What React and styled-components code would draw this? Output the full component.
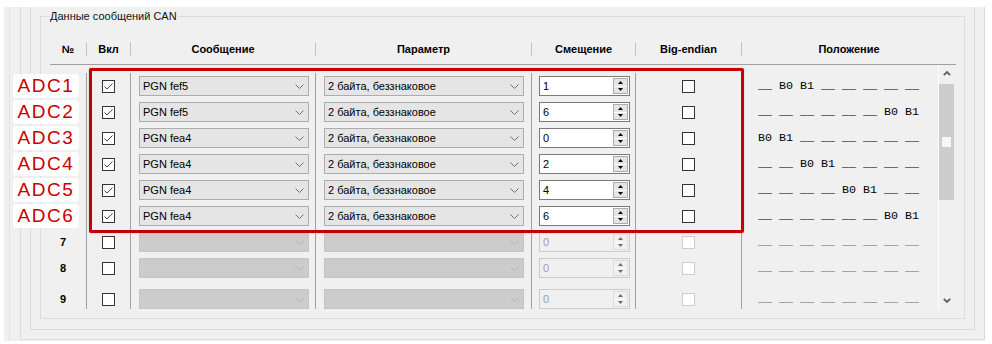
import React from 'react';
import styled, { createGlobalStyle } from 'styled-components';

const GlobalStyle = createGlobalStyle`
  html, body {
    margin: 0;
    padding: 0;
    background: #ffffff;
  }
  body {
    font-family: "Liberation Sans", Arial, sans-serif;
    font-size: 11px;
    color: #000;
  }
`;

const COLS = '36px 44px 185px 216px 104px 106px 197px';

const Screen = styled.div`
  box-sizing: border-box;
  margin: 7px 0 0 4px;
  width: 981px;
  height: 334px;
  padding-left: 5px;
  background: #f0f0f0;
  display: flex;
`;

const Rule = styled.div`
  flex: 1;
  display: flex;
  border-left: 1px solid #e2e2e2;
  padding-left: 10px;
`;

const Frame = styled.div`
  box-sizing: border-box;
  flex: 1;
  display: flex;
  flex-direction: column;
  border: 1px solid #dadada;
  border-top: none;
  margin: ${(p) => p.$margin || '0 0 1px 0'};
`;

const GroupBox = styled.div`
  position: relative;
  flex: 1;
  margin: 9px 9px 10px 9px;
  border: 1px solid #dcdcdc;
  padding: 17px 8px 9px 9px;
  display: flex;
  flex-direction: column;
`;

const Legend = styled.span`
  position: absolute;
  top: -7px;
  left: 8px;
  padding: 0 1px;
  line-height: 13px;
  background: #f0f0f0;
  color: #111;
`;

const Header = styled.div`
  display: grid;
  grid-template-columns: ${COLS.replace(/197px$/, '1fr')};
  align-items: center;
  height: 30px;
  border-bottom: 1px solid #a0a0a0;
`;

const HeaderCell = styled.div`
  height: 14px;
  line-height: 14px;
  text-align: center;
  font-weight: bold;
  font-size: 11px;
  border-left: ${(p) => (p.$first ? 'none' : '1px solid #c4c4c4')};
`;

const Body = styled.div`
  position: relative;
  display: flex;
  height: 244px;
`;

const Rows = styled.div`
  width: 888px;
  padding-top: 8px;
  box-sizing: border-box;
`;

const Row = styled.div`
  display: grid;
  grid-template-columns: ${COLS};
  height: ${(p) => (p.$tall ? 28 : 26)}px;
  box-sizing: border-box;
`;

const Cell = styled.div`
  position: relative;
  display: flex;
  align-items: center;
  justify-content: ${(p) => p.$justify || 'flex-start'};
  border-left: ${(p) => (p.$first ? 'none' : '1px solid #a0a0a0')};
  padding-top: ${(p) => (p.$tall ? 8 : 0)}px;
`;

const RowNum = styled.span`
  font-weight: bold;
  padding-left: 10px;
  font-size: 11px;
`;

const Tag = styled.div`
  position: absolute;
  left: -37px;
  top: 1px;
  width: 66px;
  height: 24px;
  border-radius: 4px;
  background: #ffffff;
  color: #c80000;
  font-family: "Liberation Sans", Arial, sans-serif;
  font-size: 19px;
  letter-spacing: 1.6px;
  line-height: 24px;
  text-align: center;
`;

const Highlight = styled.div`
  position: absolute;
  left: 39px;
  top: 3px;
  width: 655px;
  height: 165px;
  box-sizing: border-box;
  border: 3px solid #c40000;
  border-radius: 2px;
  box-shadow: 0 0 1px rgba(120, 0, 0, 0.6);
  pointer-events: none;
`;

const Box = styled.span`
  box-sizing: border-box;
  width: 13px;
  height: 13px;
  background: #fff;
  border: 1px solid ${(p) => (p.$disabled ? '#cccccc' : '#333333')};
  display: flex;
  align-items: center;
  justify-content: center;
`;

const Combo = styled.div`
  box-sizing: border-box;
  width: ${(p) => p.$w}px;
  height: 20px;
  margin-left: 8px;
  padding: 0 4px 0 3px;
  background: ${(p) => (p.$disabled ? '#cccccc' : '#e5e5e5')};
  border: 1px solid ${(p) => (p.$disabled ? '#c4c4c4' : '#adadad')};
  display: flex;
  align-items: center;
  justify-content: space-between;
  white-space: nowrap;
`;

const Spin = styled.div`
  box-sizing: border-box;
  width: 91px;
  height: 20px;
  margin-left: 7px;
  padding: 1px 1px 1px 3px;
  background: ${(p) => (p.$disabled ? '#f0f0f0' : '#ffffff')};
  border: 1px solid ${(p) => (p.$disabled ? '#cccccc' : '#7a7a7a')};
  color: ${(p) => (p.$disabled ? '#a0a0a0' : '#000')};
  display: flex;
  align-items: center;
  justify-content: space-between;
`;

const SpinButtons = styled.div`
  box-sizing: border-box;
  width: 15px;
  height: 16px;
  display: flex;
  flex-direction: column;
  border: 1px solid ${(p) => (p.$disabled ? '#dcdcdc' : '#adadad')};
  background: ${(p) => (p.$disabled ? '#f0f0f0' : '#e5e5e5')};
`;

const SpinHalf = styled.div`
  flex: 1;
  display: flex;
  align-items: center;
  justify-content: center;
  border-top: ${(p) => (p.$bottom ? '1px solid #ffffff' : 'none')};
`;

const Position = styled.span`
  padding-left: 16px;
  font-family: "Liberation Mono", "Courier New", monospace;
  font-size: 11.67px;
  white-space: pre;
  color: ${(p) => (p.$disabled ? '#6d6d6d' : '#000')};
`;

const Scrollbar = styled.div`
  width: 17px;
  box-sizing: border-box;
  border-left: 1px solid #ffffff;
  background: #f0f0f0;
  display: flex;
  flex-direction: column;
`;

const ScrollArrow = styled.div`
  height: 17px;
  display: flex;
  align-items: center;
  justify-content: center;
`;

const Track = styled.div`
  flex: 1;
  padding-top: 2px;
`;

const Thumb = styled.div`
  width: 15px;
  height: 116px;
  background: #cdcdcd;
  display: flex;
  justify-content: center;
  padding-top: 53px;
  box-sizing: border-box;
`;

const Grip = styled.div`
  width: 9px;
  height: 10px;
  background: #f7f7f7;
`;

const Chevron = ({ color = '#707070' }) => (
  <svg width="9" height="5" viewBox="0 0 9 5">
    <polyline points="0.5,0.5 4.5,4.5 8.5,0.5" fill="none" stroke={color} strokeWidth="1" />
  </svg>
);

const ScrollChevron = ({ up }) => (
  <svg width="8" height="5" viewBox="0 0 8 5">
    <polyline
      points={up ? '0.8,4.2 4,1 7.2,4.2' : '0.8,0.8 4,4 7.2,0.8'}
      fill="none"
      stroke="#606060"
      strokeWidth="1.8"
    />
  </svg>
);

const Tri = ({ up, color }) => (
  <svg width="5" height="3" viewBox="0 0 5 3">
    <polygon points={up ? '0,3 2.5,0 5,3' : '0,0 5,0 2.5,3'} fill={color} />
  </svg>
);

const Check = ({ checked, disabled }) => (
  <Box $disabled={disabled}>
    {checked && (
      <svg width="11" height="11" viewBox="0 0 11 11">
        <polyline points="1.5,5.5 4,8 9.5,2.5" fill="none" stroke="#444" strokeWidth="1" />
      </svg>
    )}
  </Box>
);

const posText = (offset) => {
  if (offset === null) return '__ __ __ __ __ __ __ __';
  const parts = Array(8).fill('__');
  parts[offset] = 'B0';
  parts[offset + 1] = 'B1';
  return parts.join(' ');
};

const rows = [
  { n: 1, tag: 'ADC1', pgn: 'PGN fef5', offset: 1 },
  { n: 2, tag: 'ADC2', pgn: 'PGN fef5', offset: 6 },
  { n: 3, tag: 'ADC3', pgn: 'PGN fea4', offset: 0 },
  { n: 4, tag: 'ADC4', pgn: 'PGN fea4', offset: 2 },
  { n: 5, tag: 'ADC5', pgn: 'PGN fea4', offset: 4 },
  { n: 6, tag: 'ADC6', pgn: 'PGN fea4', offset: 6 },
  { n: 7 },
  { n: 8 },
  { n: 9 },
];

const DataRow = ({ row, tall }) => {
  const on = Boolean(row.pgn);
  const arrow = on ? '#707070' : '#b4b4b4';
  const tri = on ? '#000' : '#6d6d6d';
  return (
    <Row $tall={tall}>
      <Cell $first $tall={tall}>
        {row.tag ? <Tag>{row.tag}</Tag> : <RowNum>{row.n}</RowNum>}
      </Cell>
      <Cell $justify="center" $tall={tall}>
        <Check checked={on} />
      </Cell>
      <Cell $tall={tall}>
        <Combo $w={170} $disabled={!on}>
          <span>{row.pgn || ''}</span>
          <Chevron color={arrow} />
        </Combo>
      </Cell>
      <Cell $tall={tall}>
        <Combo $w={200} $disabled={!on}>
          <span>{on ? '2 байта, беззнаковое' : ''}</span>
          <Chevron color={arrow} />
        </Combo>
      </Cell>
      <Cell $tall={tall}>
        <Spin $disabled={!on}>
          <span>{on ? row.offset : 0}</span>
          <SpinButtons $disabled={!on}>
            <SpinHalf>
              <Tri up color={tri} />
            </SpinHalf>
            <SpinHalf $bottom>
              <Tri color={tri} />
            </SpinHalf>
          </SpinButtons>
        </Spin>
      </Cell>
      <Cell $justify="center" $tall={tall}>
        <Check disabled={!on} />
      </Cell>
      <Cell $tall={tall}>
        <Position $disabled={!on}>{posText(on ? row.offset : null)}</Position>
      </Cell>
    </Row>
  );
};

const App = () => (
  <>
    <GlobalStyle />
    <Screen>
      <Rule>
        <Frame>
          <Frame $margin="0 9px 9px 9px">
            <GroupBox>
              <Legend>Данные сообщений CAN</Legend>
              <Header>
                <HeaderCell $first>№</HeaderCell>
                <HeaderCell>Вкл</HeaderCell>
                <HeaderCell>Сообщение</HeaderCell>
                <HeaderCell>Параметр</HeaderCell>
                <HeaderCell>Смещение</HeaderCell>
                <HeaderCell>Big-endian</HeaderCell>
                <HeaderCell>Положение</HeaderCell>
              </Header>
              <Body>
                <Rows>
                  {rows.map((row, i) => (
                    <DataRow key={row.n} row={row} tall={i === rows.length - 1} />
                  ))}
                </Rows>
                <Scrollbar>
                  <ScrollArrow>
                    <ScrollChevron up />
                  </ScrollArrow>
                  <Track>
                    <Thumb>
                      <Grip />
                    </Thumb>
                  </Track>
                  <ScrollArrow>
                    <ScrollChevron />
                  </ScrollArrow>
                </Scrollbar>
                <Highlight />
              </Body>
            </GroupBox>
          </Frame>
        </Frame>
      </Rule>
    </Screen>
  </>
);

export default App;
